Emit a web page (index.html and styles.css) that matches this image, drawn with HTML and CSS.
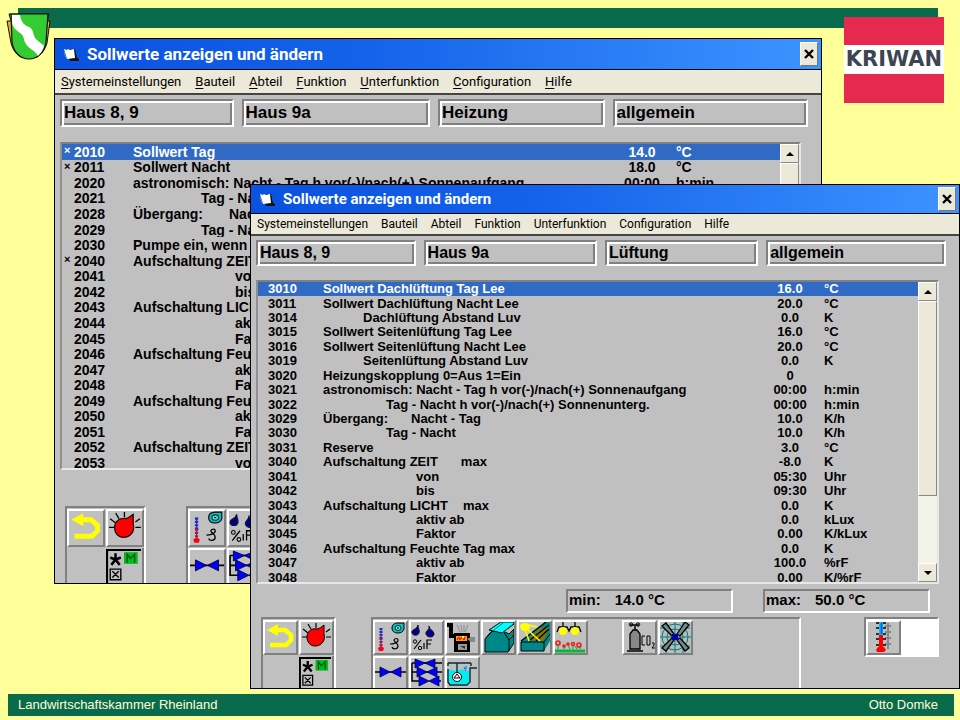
FILE: index.html
```html
<!DOCTYPE html>
<html lang="de">
<head>
<meta charset="utf-8">
<title>Sollwerte anzeigen und ändern</title>
<link rel="stylesheet" href="styles.css">
</head>
<body>
<svg class="sprite" aria-hidden="true">
  <symbol id="i-app" viewBox="0 0 16 16">
    <path d="M4 4l8-1 2 9 2 1v2H7z" fill="#111"/>
    <path d="M1 3l3 1 1-1 2 1 4-1 1 9-8 1z" fill="#fff"/>
    <path d="M1 6l2 6" stroke="#58a" stroke-width="1"/>
  </symbol>
  <symbol id="i-back" viewBox="2 2 31 31">
    <path d="M13 10h9l6 5v5l-5 5H7" fill="none" stroke="#ff0" stroke-width="4.5"/>
    <path d="M4 10L15 4v12z" fill="#ff0"/>
  </symbol>
  <symbol id="i-alarm" viewBox="2 2 31 31">
    <path d="M17 3v5M9 4l3 5M4 9l5 4M3 17h5M27 17h5M27 12l4-3" stroke="#000" stroke-width="1.2"/>
    <path d="M25 5v9c2 7-3 12-9 12-5 0-8-4-8-9s4-9 9-8c4 0 5-2 8-4z" fill="#f00" stroke="#000" stroke-width="1"/>
  </symbol>
  <symbol id="i-mode" viewBox="0 0 34 34">
    <path d="M1 34V1h32" fill="none" stroke="#000" stroke-width="2"/>
    <path d="M9 4v6M4 8l5 2 5-2M5 15l4-5 4 5" fill="none" stroke="#000" stroke-width="2.4"/>
    <path d="M17 3h13v11H17z" fill="#0b2"/>
    <path d="M20 13V5l3 4 4-4v8" fill="none" stroke="#050" stroke-width="1.3"/>
    <path d="M4 19h10v10H4zM6 21l6 6M12 21l-6 6" fill="none" stroke="#000" stroke-width="1.3"/>
  </symbol>
  <symbol id="i-temp" viewBox="2 2 31 31">
    <path d="M8 8v11" stroke="#22c" stroke-width="3" stroke-dasharray="2 1"/>
    <path d="M8 18v10" stroke="#e02" stroke-width="3" stroke-dasharray="2 1"/>
    <path d="M8 8v20" stroke="#33a" stroke-width="1"/>
    <path d="M8 26l3 2-1 3H6l-1-3z" fill="#f01"/>
    <path d="M29 3l2 0v6c-1 3-3 4-6 4-4 0-6-2-6-5s2-5 6-5z" fill="#1bb" stroke="#000"/>
    <ellipse cx="25" cy="8" rx="3" ry="2.5" fill="#7dd" stroke="#033"/><path d="M24 8h2" stroke="#000"/>
    <path d="M17 24c3 0 8-1 8-4 0-2-3-2-4 0 0 2 4 3 4 6 0 3-5 4-6 1" fill="none" stroke="#000" stroke-width="1.2"/>
  </symbol>
  <symbol id="i-hum" viewBox="2 2 31 31">
    <path d="M9 5c0 4 2 5 1 8-1 3-6 3-7 0-1-4 5-3 6-8zM20 6c0 4 5 4 5 8 0 4-7 4-8 0-1-3 4-4 3-8z" fill="#008" stroke="#113"/>
    <path d="M5 29l7-9M15 29v-6M18 29v-9h5M18 24h4" fill="none" stroke="#000" stroke-width="1.2"/>
    <circle cx="6" cy="21.500" r="1.700" fill="none" stroke="#000"/><circle cx="11" cy="28" r="1.700" fill="none" stroke="#000"/>
  </symbol>
  <symbol id="i-burner" viewBox="2 2 31 31">
    <path d="M1 5h5v11h5" fill="none" stroke="#000" stroke-width="4"/>
    <path d="M12 5l3 7M16 5l1 7M23 5l-3 7M19 5v7" stroke="#999" stroke-width="1.3"/>
    <path d="M9 13h16v19H9z" fill="#000"/>
    <path d="M11 16h11v5H11z" fill="#f91"/><path d="M12 20l2-3 1 3 2-3 2 3 1-3" stroke="#e00" fill="none"/><path d="M17 16h2v2h-2z" fill="#ff3"/>
    <path d="M13 24h9v6h-9z" fill="#999"/><path d="M15 26l5 3v-3z" fill="#333"/>
    <path d="M22 19l4-2h4v5h-4z" fill="#888"/>
  </symbol>
  <symbol id="i-valve" viewBox="2 2 31 31">
    <path d="M2 16h31" stroke="#000" stroke-width="1.5"/>
    <path d="M7 11v10l10-5zM28 11v10l-10-5z" fill="#00f" stroke="#003" stroke-width=".8"/>
  </symbol>
  <symbol id="i-valves" viewBox="2 2 31 31">
    <path d="M3 7v18h10M3 7h30M3 16h30M28 25h4" fill="none" stroke="#000" stroke-width="1.5"/>
    <path d="M6 3v9l10-5zM26 3v9L16 7zM8 11v10l10-5zM28 11v10l-10-5zM10 20v10l10-5zM30 20v10l-10-5z" fill="#00f" stroke="#003" stroke-width=".8"/>
  </symbol>
  <symbol id="i-tank" viewBox="2 2 31 31">
    <path d="M3 14h5l3 1 6-2 3 2h4v13H3z" fill="#0ee"/>
    <path d="M3 7h23M3 7v3M26 7v3M12 7v11M3 13v13l2 3h17l3-3V12h7" fill="none" stroke="#033" stroke-width="1.4"/>
    <circle cx="12" cy="21" r="4.500" fill="#fff" stroke="#000"/><path d="M9 22h6l-3-4z" stroke="#000" fill="none"/>
    <path d="M19 11l2 4M21 10v3" stroke="#06f"/>
  </symbol>
  <symbol id="i-vent" viewBox="2 2 31 31">
    <path d="M4 19L11 11h11l6 3 5-5v14l-6 9H4z" fill="#088" stroke="#000"/>
    <path d="M28 20l5-5M28 20v11M4 19l7-8h11l6 9" fill="none" stroke="#000"/>
    <path d="M8 10L20 2h13v2L21 13z" fill="#0ff" stroke="#000"/><path d="M13 10l9-7M21 13L32 4" stroke="#077"/>
  </symbol>
  <symbol id="i-shade" viewBox="2 2 31 31">
    <path d="M4 21L29 2h4v19l-6 10H4z" fill="#088"/>
    <path d="M11 20L23 8l9 0-6 13z" fill="#870"/>
    <path d="M4 21L29 2M13 20L32 5M19 21L32 9" stroke="#000" stroke-width="1.300" fill="none"/>
    <path d="M4 22h23v9H4zM27 22l6-8" fill="#088" stroke="#000"/>
    <ellipse cx="8" cy="7" rx="5" ry="4" fill="#ff0"/><path d="M10 9l13 12M8 9l4 12M12 5l8 2" stroke="#ff0" stroke-width="1.500"/>
  </symbol>
  <symbol id="i-lamp" viewBox="2 2 31 31">
    <path d="M10 2v5M22 2v5M4 12l2-5h8l2 4 2-4h8l2 5" fill="none" stroke="#000" stroke-width="1.300"/>
    <circle cx="10" cy="11" r="4" fill="#ff0"/><circle cx="22" cy="11" r="4" fill="#ff0"/>
    <path d="M2 31h30" stroke="#0b3" stroke-width="3"/><path d="M5 29v-5M11 29l1-3M17 29l-2-4M20 29v-4M27 29v-3M24 29l-2-3" stroke="#0a3"/>
    <g fill="none" stroke="#e22" stroke-width="1.700"><circle cx="5" cy="23" r="2"/><circle cx="11" cy="26" r="1"/><circle cx="15" cy="24" r="1"/><circle cx="20" cy="24" r="1.500"/><circle cx="26" cy="25" r="2"/></g>
  </symbol>
  <symbol id="i-co2" viewBox="2 2 31 31">
    <path d="M8 29V14l3-4h4l3 4v15z" fill="#888" stroke="#000" stroke-width="1.300"/>
    <path d="M5 31h16M13 10V6M8 5h9" stroke="#000" stroke-width="1.500"/>
    <circle cx="9" cy="4.500" r="1.700" fill="none" stroke="#000"/><circle cx="16" cy="4.500" r="1.700" fill="none" stroke="#000"/>
    <path d="M23 16h-3v9h3M25 16h3v9h-3zM30 23h2v2l-2 3h3" fill="none" stroke="#000"/>
  </symbol>
  <symbol id="i-fan" viewBox="2 2 31 31">
    <path d="M0 0h34v34H0z" fill="#b2bfbf"/>
    <g fill="none" stroke="#177"><circle cx="17" cy="17" r="8"/><circle cx="17" cy="17" r="13"/><path d="M0 17h34M17 0v34M1 8h8M24 8h8M1 26h8M24 26h8M8 1v8M25 1v8M8 25v8M25 25v8"/></g>
    <path d="M4 6l4-3 8 11-2 2zM31 5l-4-3-8 12 3 2zM4 28l4 3 8-11-2-2zM31 28l-4 3-8-11 3-2z" fill="#788" stroke="#000" stroke-width="1.300"/>
    <path d="M14 14h6v6h-6z" fill="#00a"/>
  </symbol>
  <symbol id="i-thermo" viewBox="2 2 31 31">
    <path d="M22 3v26M19 6h6M19 12h6M19 18h6M19 24h6" stroke="#888" stroke-width="2" fill="none"/>
    <path d="M10 3h10M10 8h10M10 14h10M10 19h10M10 25h10" stroke="#000" stroke-width="1.500"/>
    <path d="M15 2v13" stroke="#0bf" stroke-width="4"/><path d="M15.500 3v11" stroke="#05e" stroke-width="1.500"/>
    <path d="M15 15v14" stroke="#f00" stroke-width="4"/><path d="M12 27h6l2 3-2 2h-7l-1-2z" fill="#f00"/>
  </symbol>
</svg>

<div class="slide">
  <header class="topbar"></header>

  <main class="desktop">
    <section class="window back-window" aria-label="Sollwerte Heizung">
      <div class="titlebar"><svg class="app-icon"><use href="#i-app"/></svg><h2>Sollwerte anzeigen und ändern</h2><button class="close" aria-label="Schließen"><svg viewBox="0 0 10 10"><path d="M1 1l8 8M9 1L1 9"/></svg></button></div>
      <nav class="menu"><button><u>S</u>ystemeinstellungen</button><button><u>B</u>auteil</button><button><u>A</u>bteil</button><button><u>F</u>unktion</button><button><u>U</u>nterfunktion</button><button><u>C</u>onfiguration</button><button><u>H</u>ilfe</button></nav>
      <div class="fields">
        <input aria-label="Bauteil" value="Haus 8, 9" readonly>
        <input aria-label="Abteil" value="Haus 9a" readonly>
        <input aria-label="Funktion" value="Heizung" readonly>
        <input aria-label="Unterfunktion" value="allgemein" readonly>
      </div>
      <div class="listbox">
        <table>
          <colgroup><col class="c-mark"><col class="c-num"><col><col class="c-val"><col class="c-unit"></colgroup>
          <tbody>
          <tr class="selected"><td>×</td><td>2010</td><td>Sollwert Tag</td><td>14.0</td><td>°C</td></tr>
          <tr><td>×</td><td>2011</td><td>Sollwert Nacht</td><td>18.0</td><td>°C</td></tr>
          <tr><td></td><td>2020</td><td>astronomisch: Nacht - Tag h vor(-)/nach(+) Sonnenaufgang</td><td>00:00</td><td>h:min</td></tr>
          <tr><td></td><td>2021</td><td class="in2">Tag - Nacht</td><td></td><td></td></tr>
          <tr><td></td><td>2028</td><td>Übergang:<span class="gap">Nacht</span></td><td></td><td></td></tr>
          <tr><td></td><td>2029</td><td class="in2">Tag - Nacht</td><td></td><td></td></tr>
          <tr><td></td><td>2030</td><td>Pumpe ein, wenn</td><td></td><td></td></tr>
          <tr><td>×</td><td>2040</td><td>Aufschaltung ZEIT</td><td></td><td></td></tr>
          <tr><td></td><td>2041</td><td class="in3">von</td><td></td><td></td></tr>
          <tr><td></td><td>2042</td><td class="in3">bis</td><td></td><td></td></tr>
          <tr><td></td><td>2043</td><td>Aufschaltung LICHT</td><td></td><td></td></tr>
          <tr><td></td><td>2044</td><td class="in3">aktiv</td><td></td><td></td></tr>
          <tr><td></td><td>2045</td><td class="in3">Faktor</td><td></td><td></td></tr>
          <tr><td></td><td>2046</td><td>Aufschaltung Feuchte</td><td></td><td></td></tr>
          <tr><td></td><td>2047</td><td class="in3">aktiv</td><td></td><td></td></tr>
          <tr><td></td><td>2048</td><td class="in3">Faktor</td><td></td><td></td></tr>
          <tr><td></td><td>2049</td><td>Aufschaltung Feuchte</td><td></td><td></td></tr>
          <tr><td></td><td>2050</td><td class="in3">aktiv</td><td></td><td></td></tr>
          <tr><td></td><td>2051</td><td class="in3">Faktor</td><td></td><td></td></tr>
          <tr><td></td><td>2052</td><td>Aufschaltung ZEIT</td><td></td><td></td></tr>
          <tr><td></td><td>2053</td><td class="in3">von</td><td></td><td></td></tr>
          </tbody>
        </table>
        <div class="scroll"><button aria-label="Nach oben"><svg viewBox="0 0 8 4"><path d="M0 4l4-4 4 4z"/></svg></button><div class="thumb"></div><button aria-label="Nach unten"><svg viewBox="0 0 8 4"><path d="M0 0l4 4 4-4z"/></svg></button></div>
      </div>
      <div class="tools">
        <div class="group small-group">
          <button aria-label="Zurück"><svg><use href="#i-back"/></svg></button><button aria-label="Alarm"><svg><use href="#i-alarm"/></svg></button>
          <button class="mode" aria-label="Modus"><svg><use href="#i-mode"/></svg></button>
        </div>
        <div class="group main-group">
          <button aria-label="Temperatur"><svg><use href="#i-temp"/></svg></button><button aria-label="Feuchte"><svg><use href="#i-hum"/></svg></button>
          <button class="row-start" aria-label="Ventil"><svg><use href="#i-valve"/></svg></button><button aria-label="Ventile"><svg><use href="#i-valves"/></svg></button>
        </div>
      </div>
    </section>

    <section class="window front-window" aria-label="Sollwerte Lüftung">
      <div class="titlebar"><svg class="app-icon"><use href="#i-app"/></svg><h2>Sollwerte anzeigen und ändern</h2><button class="close" aria-label="Schließen"><svg viewBox="0 0 10 10"><path d="M1 1l8 8M9 1L1 9"/></svg></button></div>
      <nav class="menu"><button>Systemeinstellungen</button><button>Bauteil</button><button>Abteil</button><button>Funktion</button><button>Unterfunktion</button><button>Configuration</button><button>Hilfe</button></nav>
      <div class="fields">
        <input aria-label="Bauteil" value="Haus 8, 9" readonly>
        <input aria-label="Abteil" value="Haus 9a" readonly>
        <input aria-label="Funktion" value="Lüftung" readonly>
        <input aria-label="Unterfunktion" value="allgemein" readonly>
      </div>
      <div class="listbox">
        <table>
          <colgroup><col class="c-mark"><col class="c-num"><col><col class="c-val"><col class="c-unit"></colgroup>
          <tbody>
          <tr class="selected"><td></td><td>3010</td><td>Sollwert Dachlüftung Tag Lee</td><td>16.0</td><td>°C</td></tr>
          <tr><td></td><td>3011</td><td>Sollwert Dachlüftung Nacht Lee</td><td>20.0</td><td>°C</td></tr>
          <tr><td></td><td>3014</td><td class="in1">Dachlüftung Abstand Luv</td><td>0.0</td><td>K</td></tr>
          <tr><td></td><td>3015</td><td>Sollwert Seitenlüftung Tag Lee</td><td>16.0</td><td>°C</td></tr>
          <tr><td></td><td>3016</td><td>Sollwert Seitenlüftung Nacht Lee</td><td>20.0</td><td>°C</td></tr>
          <tr><td></td><td>3019</td><td class="in1">Seitenlüftung Abstand Luv</td><td>0.0</td><td>K</td></tr>
          <tr><td></td><td>3020</td><td>Heizungskopplung 0=Aus 1=Ein</td><td>0</td><td></td></tr>
          <tr><td></td><td>3021</td><td>astronomisch: Nacht - Tag h vor(-)/nach(+) Sonnenaufgang</td><td>00:00</td><td>h:min</td></tr>
          <tr><td></td><td>3022</td><td class="in2">Tag - Nacht h vor(-)/nach(+) Sonnenunterg.</td><td>00:00</td><td>h:min</td></tr>
          <tr><td></td><td>3029</td><td>Übergang:<span class="gap">Nacht - Tag</span></td><td>10.0</td><td>K/h</td></tr>
          <tr><td></td><td>3030</td><td class="in2">Tag - Nacht</td><td>10.0</td><td>K/h</td></tr>
          <tr><td></td><td>3031</td><td>Reserve</td><td>3.0</td><td>°C</td></tr>
          <tr><td></td><td>3040</td><td>Aufschaltung ZEIT<span class="gap">max</span></td><td>-8.0</td><td>K</td></tr>
          <tr><td></td><td>3041</td><td class="in3">von</td><td>05:30</td><td>Uhr</td></tr>
          <tr><td></td><td>3042</td><td class="in3">bis</td><td>09:30</td><td>Uhr</td></tr>
          <tr><td></td><td>3043</td><td>Aufschaltung LICHT<span class="gap-s">max</span></td><td>0.0</td><td>K</td></tr>
          <tr><td></td><td>3044</td><td class="in3">aktiv ab</td><td>0.0</td><td>kLux</td></tr>
          <tr><td></td><td>3045</td><td class="in3">Faktor</td><td>0.00</td><td>K/kLux</td></tr>
          <tr><td></td><td>3046</td><td>Aufschaltung Feuchte Tag max</td><td>0.0</td><td>K</td></tr>
          <tr><td></td><td>3047</td><td class="in3">aktiv ab</td><td>100.0</td><td>%rF</td></tr>
          <tr><td></td><td>3048</td><td class="in3">Faktor</td><td>0.00</td><td>K/%rF</td></tr>
          </tbody>
        </table>
        <div class="scroll"><button aria-label="Nach oben"><svg viewBox="0 0 8 4"><path d="M0 4l4-4 4 4z"/></svg></button><div class="thumb"></div><button aria-label="Nach unten"><svg viewBox="0 0 8 4"><path d="M0 0l4 4 4-4z"/></svg></button></div>
      </div>
      <div class="limits">
        <label>min:<input value="14.0 °C"></label>
        <label>max:<input value="50.0 °C"></label>
      </div>
      <div class="tools">
        <div class="group small-group">
          <button aria-label="Zurück"><svg><use href="#i-back"/></svg></button><button aria-label="Alarm"><svg><use href="#i-alarm"/></svg></button>
          <button class="mode" aria-label="Modus"><svg><use href="#i-mode"/></svg></button>
        </div>
        <div class="group main-group">
          <button aria-label="Temperatur"><svg><use href="#i-temp"/></svg></button><button aria-label="Feuchte"><svg><use href="#i-hum"/></svg></button><button aria-label="Brenner"><svg><use href="#i-burner"/></svg></button><button aria-label="Lüftung"><svg><use href="#i-vent"/></svg></button><button aria-label="Schattierung"><svg><use href="#i-shade"/></svg></button><button aria-label="Belichtung"><svg><use href="#i-lamp"/></svg></button><button class="apart" aria-label="CO2"><svg><use href="#i-co2"/></svg></button><button aria-label="Ventilator"><svg><use href="#i-fan"/></svg></button>
          <button class="row-start" aria-label="Ventil"><svg><use href="#i-valve"/></svg></button><button aria-label="Ventile"><svg><use href="#i-valves"/></svg></button><button aria-label="Bewässerung"><svg><use href="#i-tank"/></svg></button>
        </div>
        <div class="group single-group"><button aria-label="Thermometer"><svg><use href="#i-thermo"/></svg></button></div>
      </div>
    </section>
  </main>

  <footer class="footer"><span>Landwirtschaftskammer Rheinland</span><span>Otto Domke</span></footer>

  <svg class="crest" viewBox="0 0 45 47" role="img" aria-label="Wappen">
    <path d="M3 1L5 8H1l4 22c2 8 7 13 10 14l8 1 8-1c4-2 8-7 10-14l3-22h-3l2-7z" fill="#d9b71c" stroke="#111"/>
    <path d="M5 1h37l-2 28c-1 9-8 17-17 17S7 38 6 29z" fill="#3c3" stroke="#111" stroke-width="1.200"/>
    <path d="M6 2h8c1 7 4 10 9 12 6 3 3 9 8 13 3 3 6 4 7 6-1 4-3 7-6 10-3-6-9-7-12-12-3-4-1-8-6-11C10 17 6 14 6 8z" fill="#fff"/>
  </svg>
  <div class="brand">KRIWAN</div>
</div>
</body>
</html>
```
FILE: styles.css
```css
* { box-sizing: border-box; }
body { margin: 0; background: #ff9; font-family: "Liberation Sans", sans-serif; color: #000; }
button, input { font: inherit; color: inherit; margin: 0; padding: 0; border: 0; background: none; border-radius: 0; }
.sprite { display: none; }

.slide { position: relative; display: flex; flex-direction: column; min-height: 100vh; overflow: hidden; }
.topbar { height: 20px; margin: 8px 22px 0 18px; background: #096b4b; }
.desktop { position: relative; flex: 1; }
.footer {
  display: flex; justify-content: space-between; align-items: center;
  height: 22px; margin: 0 6px 4px 8px; padding: 0 16px 2px 10px;
  background: #096b4b; color: #ffffd8; font-size: 13px;
}
.crest { position: absolute; left: 6px; top: 13px; width: 45px; height: 47px; }
.brand {
  position: absolute; right: 16px; top: 17px; width: 100px; height: 86px;
  border: solid #e5294f; border-width: 28px 0 29px; background: #fff;
  color: #3d4452; font: bold 21px/29px "DejaVu Sans", sans-serif;
  display: flex; justify-content: center; overflow: hidden;
}

/* Windows */
.window {
  position: absolute; display: flex; flex-direction: column; overflow: hidden;
  border: 1px solid #000; background: #c0c0c0;
}
.back-window {
  --title: 31px; --title-size: 17px; --menu: 25px; --menu-size: 13px; --menu-gap: 14px;
  --field: 28px; --field-size: 17px; --list: 328px; --list-size: 14px; --btn: 38px;
  --in1: 44px; --in2: 68px; --in3: 102px; --gap: 26px;
  left: 54px; right: 138px; top: 10px; height: 546px;
}
.front-window {
  --title: 29px; --title-size: 15px; --menu: 22px; --menu-size: 12px; --menu-gap: 13px;
  --field: 26px; --field-size: 16px; --list: 304px; --list-size: 13px; --btn: 35px;
  --in1: 40px; --in2: 63px; --in3: 93px; --gap: 23px;
  left: 250px; right: 0; top: 156px; height: 505px;
}
.titlebar {
  flex: none; display: flex; align-items: center; gap: 8px; height: var(--title); padding: 0 3px 0 8px;
  border-bottom: 1px solid #000; color: #fff;
  background: linear-gradient(90deg, #0a52e0, #1462ea 40%, #3c94ff);
}
.titlebar h2 { flex: 1; margin: 0; font: bold var(--title-size)/20px Roboto, sans-serif; white-space: nowrap; }
.app-icon { width: 16px; height: 16px; }
.close { width: 18px; height: 24px; background: #ece9d8; border: 1px solid; border-color: #fff #777 #777 #fff; display: grid; place-items: center; }
.close svg { width: 10px; height: 10px; fill: none; stroke: #000; stroke-width: 2.4; }
.menu {
  flex: none; display: flex; align-items: center; gap: var(--menu-gap); height: var(--menu); padding: 0 6px;
  background: #ece9d8; border-bottom: 2px solid #444; font: var(--menu-size)/16px Roboto, sans-serif; white-space: nowrap;
}
.menu u { text-underline-offset: 2px; }
.fields { flex: none; display: grid; grid-template-columns: 174fr 189fr 167fr 196fr; gap: 8px; padding: 4px 13px 0 5px; }
.fields input {
  width: 100%; min-width: 0; height: var(--field); padding: 0 2px; font-weight: bold; font-size: var(--field-size);
  background: #c0c0c0; border: 2px solid; border-color: #808080 #fff #fff #808080;
  box-shadow: inset 2px 2px #fff, inset -2px -2px #808080;
}

/* Value list */
.listbox {
  flex: none; display: flex; height: var(--list); margin: 14px 20px 0 5px; overflow: hidden;
  border: 2px solid; border-color: #808080 #e8e8e8 #e8e8e8 #909090;
}
.back-window .listbox { margin-top: 15px; }
.listbox table { flex: 1; min-width: 0; height: calc(100% + 3px); table-layout: fixed; border-collapse: collapse; font-weight: bold; font-size: var(--list-size); line-height: 14px; white-space: nowrap; }
.listbox td { padding: 0; overflow: hidden; }
.selected { background: #316ac5; color: #fff; }
.c-mark { width: 12px; }
.c-num { width: 59px; }
.c-val { width: 50px; }
.c-unit { width: 113px; }
.front-window .c-mark { width: 10px; }
.front-window .c-num { width: 55px; }
.front-window .c-unit { width: 103px; }
.listbox td:nth-child(1) { padding-left: 2px; font-size: 11px; line-height: 12px; vertical-align: top; }
.listbox td:nth-child(4) { text-align: center; }
.listbox td:nth-child(5) { padding-left: 9px; }
.listbox td.in1 { padding-left: var(--in1); }
.listbox td.in2 { padding-left: var(--in2); }
.listbox td.in3 { padding-left: var(--in3); }
.gap { margin-left: var(--gap); }
.gap-s { margin-left: 15px; }
.scroll { flex: none; display: flex; flex-direction: column; width: 19px; background: #f4f3ea; }
.scroll button, .thumb { background: #ece9d8; border: 1px solid; border-color: #fff #888 #888 #fff; }
.scroll button { height: 19px; display: grid; place-items: center; }
.scroll svg { width: 8px; height: 4px; }
.thumb { height: 195px; margin-bottom: auto; }

/* Limits */
.limits { flex: none; display: flex; gap: 30px; margin: 5px 29px 0 315px; font-weight: bold; font-size: 15px; line-height: 16px; }
.limits label { flex: 1; min-width: 0; display: flex; align-items: center; gap: 14px; height: 24px; padding: 0 0 2px 1px; border: 2px solid; border-color: #808080 #fff #fff #808080; }
.limits input { flex: 1; min-width: 0; width: 0; font-weight: bold; }

/* Icon tools */
.tools { flex: 1; display: flex; align-items: flex-start; margin-left: 10px; }
.back-window .tools { margin-top: 36px; }
.front-window .tools { margin-top: 4px; padding-right: 20px; }
.group { display: grid; grid-auto-rows: var(--btn); gap: 1px; height: 100px; padding: 1px 0; border: 2px solid; border-color: #808080 #fff #fff #808080; }
.small-group { grid-template-columns: var(--btn) var(--btn); }
.main-group { flex: 1; margin-left: 35px; grid-template-columns: repeat(6, var(--btn)) 32px repeat(2, var(--btn)); }
.back-window .main-group { margin-left: 40px; }
.group button { border: 2px solid; border-color: #fff #808080 #808080 #fff; background: #c0c0c0; min-width: 0; }
.group svg { display: block; width: 100%; height: 100%; }
.mode { grid-column: 2; }
.row-start { grid-column: 1; }
.apart { grid-column: 8; }
.group .mode { border-width: 0 2px 0 0; }
.single-group { width: 75px; height: 40px; margin-left: 63px; grid-template-columns: var(--btn); background: #fff; }
```
